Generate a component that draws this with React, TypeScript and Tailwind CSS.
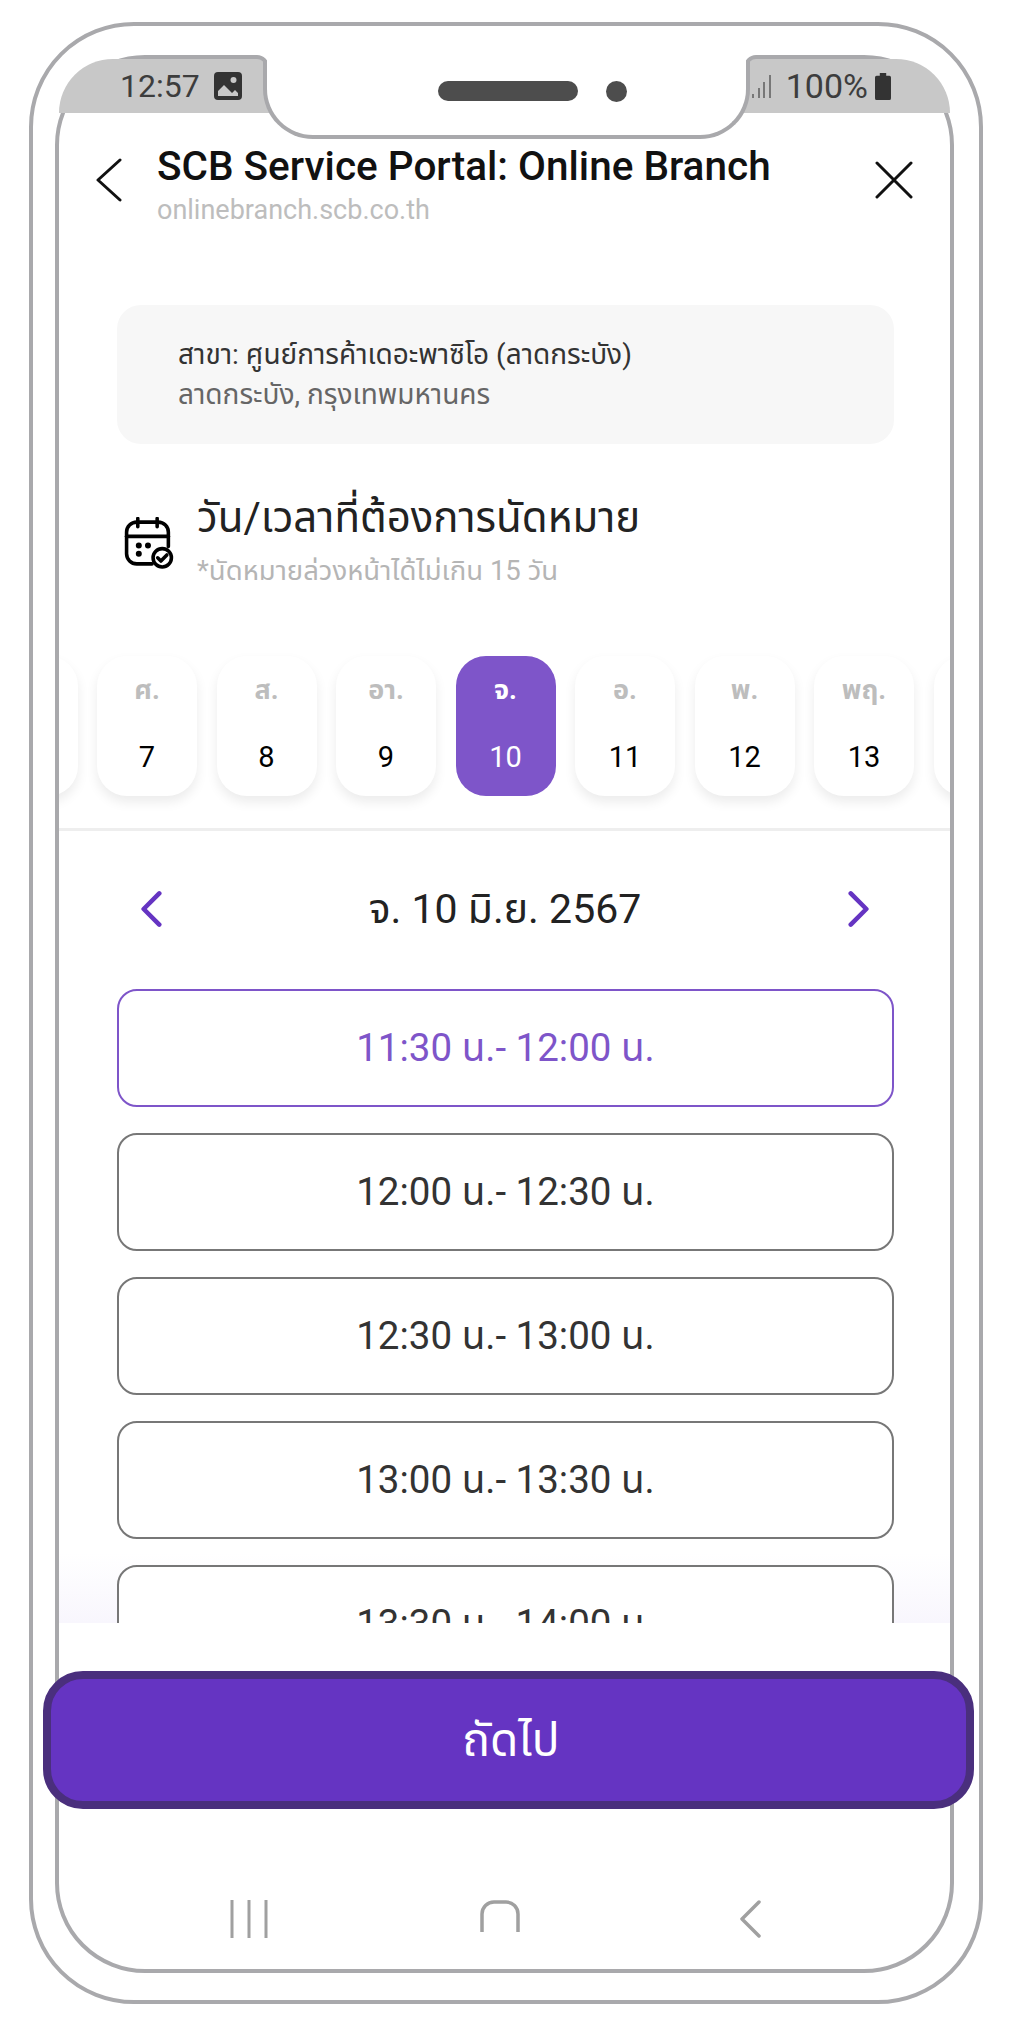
const thai = "font-['Roboto','Noto_Sans','Noto_Sans_Thai','Loma','DejaVu_Sans',sans-serif]";

const days = [
  { d: '', n: '' },
  { d: 'ศ.', n: '7' },
  { d: 'ส.', n: '8' },
  { d: 'อา.', n: '9' },
  { d: 'จ.', n: '10', active: true },
  { d: 'อ.', n: '11' },
  { d: 'พ.', n: '12' },
  { d: 'พฤ.', n: '13' },
  { d: '', n: '' },
];

const slots = ['11:30 น.- 12:00 น.', '12:00 น.- 12:30 น.', '12:30 น.- 13:00 น.', '13:00 น.- 13:30 น.', '13:30 น.- 14:00 น.'];

function CalendarCheck() {
  return (
    <svg viewBox="0 0 48 52" className="h-[53px] w-[50px] shrink-0 mt-[4px]" fill="none" stroke="#000" strokeWidth="3.5" strokeLinecap="round" strokeLinejoin="round">
      <path d="M13 1.5v8M32 1.5v8" />
      <path d="M27 46H12a10 10 0 0 1-10-10V15A10 10 0 0 1 12 5h21a10 10 0 0 1 10 10v14" />
      <path d="M2 19h41" />
      <circle cx="14" cy="28" r="1.2" fill="#000" />
      <circle cx="23" cy="28" r="1.2" fill="#000" />
      <circle cx="14" cy="36" r="1.2" fill="#000" />
      <circle cx="37" cy="40" r="9" fill="#fff" />
      <path d="M32.5 40l3.2 3.2 5.8-6" />
    </svg>
  );
}

export default function App() {
  return (
    <div className={`w-[1010px] h-[2029px] bg-white pt-[22px] pl-[29px] overflow-hidden ${thai}`}>
      {/* body */}
      <div className="w-[954px] h-[1982px] border-[4px] border-[#a9a9ac] rounded-[105px] pt-[29px] pl-[22px]">
        {/* screen */}
        <div className="relative w-[899px] h-[1918px] border-[4px] border-[#a9a9ac] rounded-[90px] flex flex-col">
          <div className="h-[54px] shrink-0 bg-[#c8c8c8] rounded-t-[84px] flex items-center justify-between pl-[61px] pr-[59px] text-[#3d3d3d]">
            <div className="flex items-center gap-[14px]">
              <span className="text-[32px] leading-none">12:57</span>
              <svg viewBox="0 0 28 28" className="w-[28px] h-[28px]">
                <rect width="28" height="28" rx="4" fill="#333" />
                <circle cx="19.5" cy="8" r="3" fill="#c8c8c8" />
                <path d="M4 24v-5l6-6 8 8 3-3 3 3v3z" fill="#c8c8c8" />
              </svg>
            </div>
            <div className="flex items-center gap-[7px]">
              <svg viewBox="0 0 20 26" className="w-[20px] h-[26px] mr-[7px]" fill="#777">
                <rect x="0" y="21" width="2" height="4" />
                <rect x="6" y="15" width="2" height="10" />
                <rect x="11" y="9" width="2" height="16" />
                <rect x="17" y="2" width="2" height="23" />
              </svg>
              <span className="text-[34px] leading-none">100%</span>
              <svg viewBox="0 0 20 30" className="w-[16px] h-[28px]" preserveAspectRatio="none">
                <path d="M6 1h8v3h4a2 2 0 0 1 2 2v22a2 2 0 0 1-2 2H2a2 2 0 0 1-2-2V6a2 2 0 0 1 2-2h4z" fill="#333" />
              </svg>
            </div>
          </div>

          {/* notch */}
          <div className="absolute top-[-4px] left-[204px] w-[487px] h-[84px] bg-white border-[4px] border-[#a9a9ac] border-t-0 rounded-b-[50px] flex items-center justify-center gap-[28px] pl-[52px] pb-[8px]">
            <div className="w-[140px] h-[20px] rounded-full bg-[#4d4d4d]" />
            <div className="w-[21px] h-[21px] rounded-full bg-[#4d4d4d]" />
          </div>
          {/* notch top corners */}
          <svg viewBox="0 0 12 12" className="absolute top-[-4px] left-[196px] w-[12px] h-[12px]">
            <path d="M0 0h12v12A10 10 0 0 0 2 2z" fill="#fff" />
            <path d="M0 2h2a10 10 0 0 1 10 10" fill="none" stroke="#a9a9ac" strokeWidth="4" />
          </svg>
          <svg viewBox="0 0 12 12" className="absolute top-[-4px] left-[687px] w-[12px] h-[12px]">
            <path d="M12 0H0v12A10 10 0 0 1 10 2z" fill="#fff" />
            <path d="M12 2h-2A10 10 0 0 0 0 12" fill="none" stroke="#a9a9ac" strokeWidth="4" />
          </svg>

          {/* header */}
          <div className="flex items-start pl-[36px] pr-[37px] h-[192px] shrink-0">
            <svg viewBox="0 0 28 44" className="w-[28px] h-[44px] mt-[45px] shrink-0" fill="none" stroke="#111" strokeWidth="3" strokeLinecap="round" strokeLinejoin="round">
              <path d="M25 2 3 22l22 20" />
            </svg>
            <div className="ml-[34px] pt-[31px] flex-1">
              <div className="text-[40.5px] leading-[44px] font-medium text-[#111] whitespace-nowrap">SCB Service Portal: Online Branch</div>
              <div className="text-[27px] leading-[30px] mt-[7px] text-[#bdbdbd]">onlinebranch.scb.co.th</div>
            </div>
            <svg viewBox="0 0 38 38" className="w-[38px] h-[38px] mt-[48px] shrink-0" fill="none" stroke="#111" strokeWidth="3" strokeLinecap="round">
              <path d="M2 2l34 34M36 2 2 36" />
            </svg>
          </div>

          {/* branch */}
          <div className="ml-[58px] mr-[56px] h-[139px] shrink-0 rounded-[24px] bg-[#f7f7f7] pl-[61px] pt-[30px]">
            <div className="text-[28px] leading-[40px] text-[#333]">สาขา: ศูนย์การค้าเดอะพาซิโอ (ลาดกระบัง)</div>
            <div className="text-[28px] leading-[40px] text-[#666]">ลาดกระบัง, กรุงเทพมหานคร</div>
          </div>

          {/* heading */}
          <div className="flex items-center ml-[65px] mt-[47px] shrink-0">
            <CalendarCheck />
            <div className="ml-[23px]">
              <div className="text-[42px] leading-[54px] text-[#222]">วัน/เวลาที่ต้องการนัดหมาย</div>
              <div className="text-[27.5px] leading-[40px] mt-[6px] text-[#b5b5b5]">*นัดหมายล่วงหน้าได้ไม่เกิน 15 วัน</div>
            </div>
          </div>

          {/* days */}
          <div className="overflow-hidden shrink-0 pt-[65px] pb-[32px]">
            <div className="flex gap-[19.5px] ml-[-81.5px]">
              {days.map((x, i) => (
                <div
                  key={i}
                  className={`w-[100px] h-[140px] shrink-0 rounded-[30px] flex flex-col items-center pt-[14px] ${x.active ? 'bg-[#7e55c9] text-white' : 'bg-white shadow-[0_6px_12px_rgba(0,0,0,0.08)] text-black'}`}
                >
                  {x.n && <div className={`text-[27px] leading-[40px] font-bold ${x.active ? 'text-white' : 'text-[#bdbdbd]'}`}>{x.d}</div>}
                  {x.n && <div className="text-[29px] leading-[40px] mt-[27px]">{x.n}</div>}
                </div>
              ))}
            </div>
          </div>
          <div className="h-[3px] shrink-0 bg-[#eeeeee]" />

          {/* date nav */}
          <div className="flex items-center justify-between h-[158px] shrink-0 pl-[81px] pr-[80px] pb-[2px]">
            <svg viewBox="0 0 24 40" className="w-[22px] h-[40px]" fill="none" stroke="#6534c2" strokeWidth="5" strokeLinecap="round" strokeLinejoin="round">
              <path d="M21 3 4 20l17 17" />
            </svg>
            <div className="text-[41px] leading-[50px] text-[#222]">จ. 10 มิ.ย. 2567</div>
            <svg viewBox="0 0 24 40" className="w-[22px] h-[40px]" fill="none" stroke="#6534c2" strokeWidth="5" strokeLinecap="round" strokeLinejoin="round">
              <path d="M3 3l17 17L3 37" />
            </svg>
          </div>

          {/* slots */}
          <div className="relative h-[634px] shrink-0 overflow-hidden">
            <div className="absolute bottom-0 left-0 right-0 h-[70px] bg-gradient-to-b from-white to-[#f8f6fd]" />
            <div className="relative flex flex-col gap-[26px] pl-[58px] pr-[56px]">
              {slots.map((s, i) => (
                <div
                  key={s}
                  className={`h-[118px] shrink-0 rounded-[20px] border-[2.5px] bg-white flex items-center justify-center text-[38.5px] ${i === 0 ? 'border-[#7e55c9] text-[#7e55c9]' : 'border-[#777777] text-[#333333]'}`}
                >
                  {s}
                </div>
              ))}
            </div>
          </div>

          {/* next button */}
          <div className="ml-[-16px] mr-[-24px] mt-[48px] h-[138px] shrink-0 rounded-[40px] border-[8px] border-[#4a2f7d] bg-[#6534c2] flex items-center justify-center text-white text-[46px] relative pl-[5px]">
            ถัดไป
          </div>

          {/* android nav */}
          <div className="flex-1 flex items-start pt-[91px] pl-[171px]">
            <svg viewBox="0 0 38 38" className="w-[38px] h-[38px] shrink-0" stroke="#a0a0a0" strokeWidth="3">
              <path d="M2 0v38M19 0v38M36 0v38" />
            </svg>
            <svg viewBox="0 0 40 32" className="w-[40px] h-[32px] shrink-0 ml-[212px]" fill="none" stroke="#a0a0a0" strokeWidth="3.5">
              <path d="M2 32V14A12 12 0 0 1 14 2h12a12 12 0 0 1 12 12v18" />
            </svg>
            <svg viewBox="0 0 22 38" className="w-[22px] h-[38px] shrink-0 ml-[219px]" fill="none" stroke="#a0a0a0" strokeWidth="3.5" strokeLinecap="round" strokeLinejoin="round">
              <path d="M20 2 3 19l17 17" />
            </svg>
          </div>
        </div>
      </div>
    </div>
  );
}
